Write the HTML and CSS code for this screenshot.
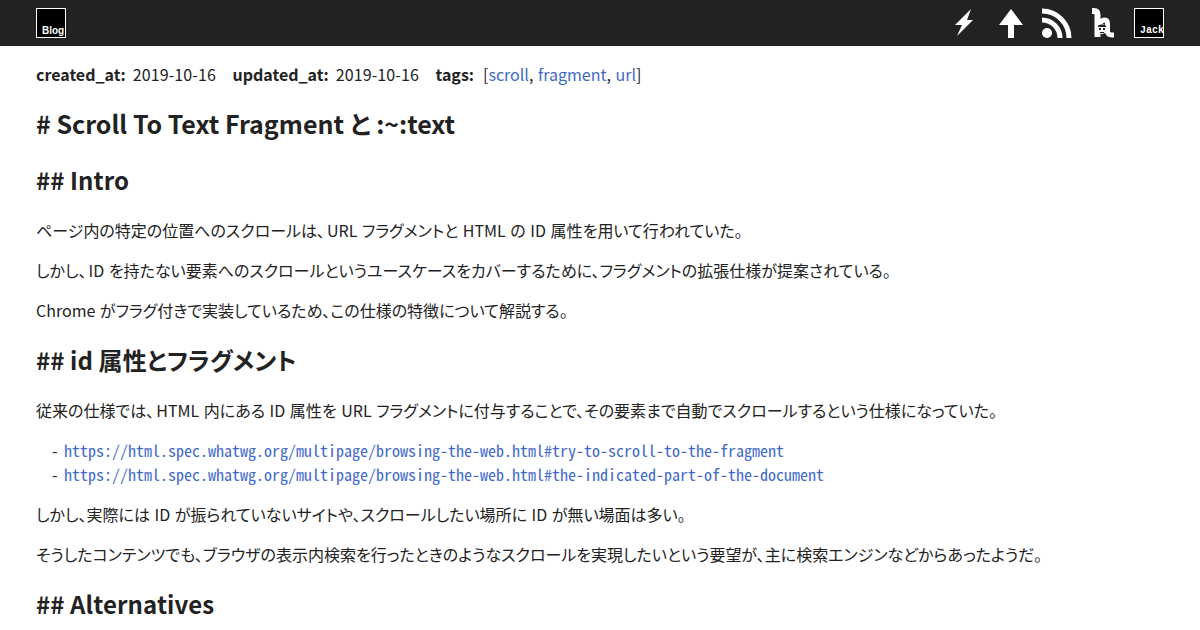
FILE: index.html
```html
<!DOCTYPE html>
<html lang="ja">
<head>
<meta charset="UTF-8">
<meta name="viewport" content="width=device-width, initial-scale=1.0">
<title>Scroll To Text Fragment と :~:text</title>
<link rel="stylesheet" href="styles.css">
</head>
<body>
<header class="site-header">
  <a class="avatar" href="#"><span>Blog</span></a>
  <nav class="header-icons">
    <a href="#" class="icon-link">
      <svg width="30" height="30" viewBox="0 0 30 30"><path fill="#fff" d="M21 1 L5 17 L12 17 L7 28 L23 12 L17 12 Z"/></svg>
    </a>
    <a href="#" class="icon-link">
      <svg width="30" height="30" viewBox="0 0 30 30"><path fill="#fff" d="M15 1 L27 17 L18 17 L18 30 L12 30 L12 17 L3 17 Z"/></svg>
    </a>
    <a href="#" class="icon-link">
      <svg width="30" height="30" viewBox="0 0 30 30"><circle cx="5" cy="25" r="5" fill="#fff"/><path fill="none" stroke="#fff" stroke-width="5" d="M0 12 A18 18 0 0 1 18 30"/><path fill="none" stroke="#fff" stroke-width="5" d="M0 3 A27 27 0 0 1 27 30"/></svg>
    </a>
    <a href="#" class="icon-link">
      <svg width="30" height="30" viewBox="0 0 30 30"><path fill="none" stroke="#fff" stroke-width="6" d="M4 3 H6 C8 3 9.5 4 9.5 7 V29"/><path fill="none" stroke="#fff" stroke-width="5" d="M11 16 C13 13 15 12 17 12 C19 12 19.5 14 19.5 16 V24 C19.5 26 22 27 26 27"/><circle cx="14" cy="21" r="5" fill="#fff"/><path fill="#222" d="M10 18 C11 16 17 16 18 18 V19 H10 Z"/><rect x="11" y="20" width="2" height="2" fill="#222"/><rect x="15" y="20" width="2" height="2" fill="#222"/><rect x="12" y="24" width="4" height="1" fill="#222"/></svg>
    </a>
    <a class="avatar avatar-mono" href="#"><span>Jack</span></a>
  </nav>
</header>

<main class="content">
  <p class="meta">
    <b>created_at:</b><span class="meta-value">2019-10-16</span>
    <b>updated_at:</b><span class="meta-value">2019-10-16</span>
    <b>tags:</b><span class="meta-tags">[<a href="#">scroll</a>, <a href="#">fragment</a>, <a href="#">url</a>]</span>
  </p>

  <h1># Scroll To Text Fragment と :~:text</h1>

  <h2>## Intro</h2>
  <p>ページ内の特定の位置へのスクロールは<span class="comma">、</span>URL フラグメントと HTML の ID 属性を用いて行われていた。</p>
  <p>しかし<span class="comma">、</span>ID を持たない要素へのスクロールというユースケースをカバーするために、フラグメントの拡張仕様が提案されている。</p>
  <p>Chrome がフラグ付きで実装しているため、この仕様の特徴について解説する。</p>

  <h2>## id 属性とフラグメント</h2>
  <p>従来の仕様では<span class="comma">、</span>HTML 内にある ID 属性を URL フラグメントに付与することで、その要素まで自動でスクロールするという仕様になっていた。</p>
  <ul class="links">
    <li><a href="#">https://html.spec.whatwg.org/multipage/browsing-the-web.html#try-to-scroll-to-the-fragment</a></li>
    <li><a href="#">https://html.spec.whatwg.org/multipage/browsing-the-web.html#the-indicated-part-of-the-document</a></li>
  </ul>
  <p>しかし、実際には ID が振られていないサイトや、スクロールしたい場所に ID が無い場面は多い。</p>
  <p>そうしたコンテンツでも、ブラウザの表示内検索を行ったときのようなスクロールを実現したいという要望が、主に検索エンジンなどからあったようだ。</p>

  <h2>## Alternatives</h2>
</main>
</body>
</html>
```

FILE: styles.css
```css
html {
  overflow: hidden;
}

body {
  margin: 0;
  font-family: "Noto Sans CJK JP", sans-serif;
  font-size: 16px;
  line-height: 24px;
  color: #222;
  background-color: #fff;
  font-feature-settings: "palt";
}

a {
  color: #3f69c8;
  text-decoration: none;
}

.comma {
  margin-right: 2px;
}

.site-header {
  display: flex;
  justify-content: space-between;
  align-items: center;
  height: 46px;
  padding: 0 36px;
  background-color: #222;
}

.avatar {
  display: flex;
  align-items: flex-end;
  box-sizing: border-box;
  width: 30px;
  height: 30px;
  overflow: hidden;
  padding-left: 5px;
  border: 1px solid #fff;
  background-color: #000;
  color: #fff;
  font-family: "Liberation Sans", sans-serif;
  font-size: 10px;
  font-weight: bold;
  line-height: 12px;
  white-space: nowrap;
}

.avatar-mono {
  font-family: "Liberation Mono", monospace;
}

.header-icons {
  display: flex;
  align-items: center;
  gap: 16px;
}

.icon-link {
  display: block;
  height: 30px;
}

.content {
  padding: 16px 36px 0;
}

p {
  margin: 0 0 16px;
  word-spacing: 1px;
}

.meta {
  margin-bottom: 0;
  word-spacing: 0;
}

.meta-value {
  margin: 0 13px 0 7px;
  letter-spacing: 0.1px;
}

.meta-tags {
  margin-left: 9px;
}

.meta-tags a + a {
  margin-left: 1px;
}

h1 {
  margin: 19px 0 21px;
  font-size: 25px;
  line-height: 36px;
}

h2 {
  margin: 20px 0 20px;
  font-size: 24px;
  line-height: 36px;
  letter-spacing: 0.1px;
}

.links {
  margin: 0 0 16px;
  padding: 0 0 0 16px;
  list-style: none;
  font-family: "Noto Sans Mono CJK JP", "DejaVu Sans Mono", monospace;
  font-size: 16px;
}

.links li::before {
  content: "-";
  display: inline-block;
  width: 12px;
  color: #222;
  font-family: "Noto Sans CJK JP", sans-serif;
}
```
